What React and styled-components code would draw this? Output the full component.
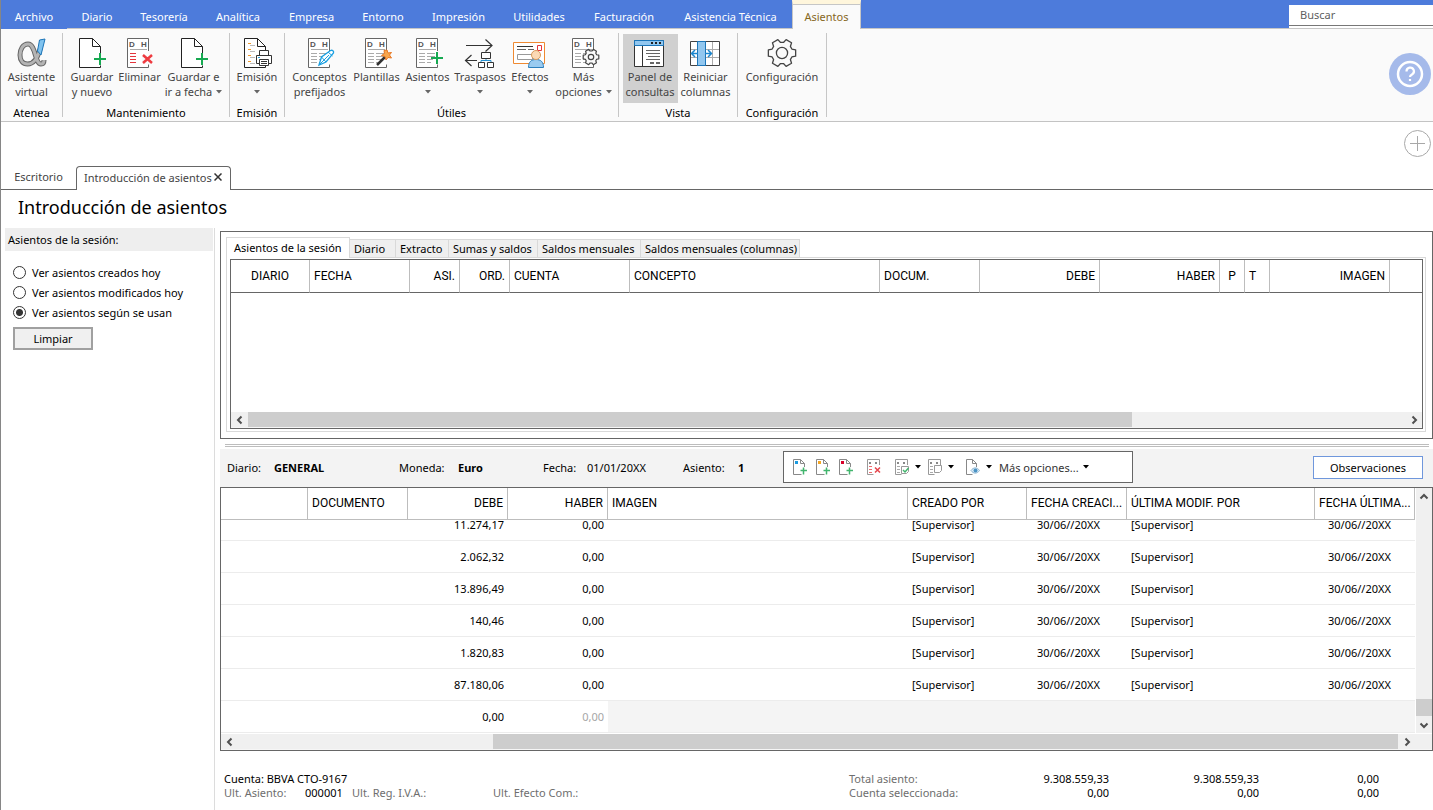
import { useLayoutEffect, useRef } from 'react';
import styled, { createGlobalStyle } from 'styled-components';

const GlobalStyle = createGlobalStyle`
  * {
    box-sizing: border-box;
  }
  html, body, #root {
    height: 100%;
  }
  body {
    margin: 0;
    background: #fff;
    color: #000;
    font-family: 'Noto Sans', 'Open Sans', sans-serif;
    font-size: 11px;
    line-height: 15px;
  }
  button, input {
    font: inherit;
    color: inherit;
    margin: 0;
  }
  button {
    padding: 0;
    border: 0;
    background: none;
    white-space: nowrap;
  }
`;

const Window = styled.div`
  display: flex;
  flex-direction: column;
  min-height: 100%;
  border-left: 1px solid #868686;
  overflow: hidden;
`;

/* ---------- menu ---------- */

const MenuBar = styled.nav`
  display: flex;
  height: 29px;
  background: #4d7bdb;
  border-bottom: 1px solid #c6c6c6;
`;

const MenuItem = styled.button`
  width: ${({ $width }) => $width}px;
  height: 28px;
  padding-top: 5px;
  color: #fff;
`;

const FileItem = styled(MenuItem)`
  height: 29px;
  padding-top: 4px;
  background: #4d7bdb;
`;

const ActiveItem = styled(MenuItem)`
  height: 29px;
  padding-top: 0;
  color: #86671c;
  background: #fafafa;
  border: 1px solid #c6c6c6;
  border-top: 4px solid #fff6dc;
  border-bottom: 0;
  box-shadow: inset 0 1px #c6c6c6;
`;

const Search = styled.div`
  width: 144px;
  height: 23px;
  margin: 5px 0 0 auto;
  background: #fff;
  input {
    display: block;
    width: 100%;
    height: 21px;
    padding: 0 11px 2px;
    border: 0;
    border-bottom: 1px solid #777;
    background: #fff;
    outline: 0;
  }
  input::placeholder {
    color: #606060;
    opacity: 1;
  }
`;

/* ---------- ribbon ---------- */

const Ribbon = styled.div`
  display: flex;
  height: 93px;
  padding: 4px 2px 4px 0;
  background: #fafafa;
  border-bottom: 1px solid #c3c3c3;
`;

const Group = styled.section`
  display: flex;
  flex-direction: column;
  align-items: center;
  flex: none;
  width: ${({ $width }) => $width}px;
  border-right: 1px solid #c6c6c6;
  h2 {
    margin: auto 0 -3px;
    font-size: 11px;
    font-weight: 400;
    line-height: 15px;
  }
`;

const Buttons = styled.div`
  display: flex;
  padding-top: 1px;
`;

const RibbonButton = styled.button`
  display: flex;
  flex-direction: column;
  align-items: center;
  width: ${({ $width }) => $width}px;
  height: 69px;
  padding-top: 4px;
  color: #444;
  background: ${({ $active }) => ($active ? '#d0d0d0' : 'none')};
  svg {
    display: block;
    flex: none;
  }
  span {
    display: flex;
    align-items: center;
    justify-content: center;
    gap: 4px;
    height: 15px;
  }
`;

const HelpButton = styled.button`
  flex: none;
  width: 42px;
  height: 42px;
  margin: 20px 0 0 auto;
  svg {
    display: block;
  }
`;

/* ---------- documents ---------- */

const DocumentBar = styled.div`
  display: flex;
  align-items: flex-end;
  height: 68px;
  border-bottom: 1px solid #666;
`;

const DocumentTab = styled.button`
  width: 75px;
  height: 24px;
  padding-bottom: 2px;
  color: #444;
`;

const CurrentTab = styled.div`
  display: flex;
  align-items: center;
  justify-content: space-between;
  width: 155px;
  height: 24px;
  margin-bottom: -1px;
  padding: 0 8px 3px 7px;
  border: 1px solid #666;
  border-bottom: 0;
  border-radius: 4px 4px 0 0;
  background: #fff;
  color: #444;
  svg {
    display: block;
  }
`;

const AddButton = styled.button`
  align-self: flex-start;
  margin: 8px 2px 0 auto;
  svg {
    display: block;
  }
`;

const Title = styled.h1`
  height: 38px;
  margin: 0;
  padding: 5px 17px;
  font-size: 18px;
  font-weight: 400;
  line-height: 25px;
`;

const Content = styled.div`
  display: flex;
  flex: 1;
`;

const Sidebar = styled.aside`
  flex: none;
  width: 214px;
  padding: 0 1px 0 4px;
  border-right: 1px solid #dcdcdc;
  h3 {
    margin: 0 0 11px;
    padding: 4px 3px;
    background: #eee;
    font-size: 11px;
    font-weight: 400;
  }
`;

const Option = styled.label`
  display: flex;
  align-items: center;
  gap: 6px;
  height: 20px;
  padding-left: 8px;
  input {
    appearance: none;
    width: 13px;
    height: 13px;
    border: 1px solid #333;
    border-radius: 50%;
    background: #fff;
  }
  input:checked {
    border-color: #333;
    background: radial-gradient(circle, #333 3px, #fff 4px);
  }
`;

const ClearButton = styled.button`
  width: 80px;
  height: 23px;
  margin: 5px 8px;
  border: 2px solid #a0a0a0;
  background: #f0f0f0;
`;

const Main = styled.main`
  flex: 1;
  min-width: 0;
  padding: 3px 0 0 5px;
`;

/* ---------- query panel ---------- */

const Panel = styled.section`
  padding: 5px 6px 6px 5px;
  border: 1px solid #666;
`;

const Tabs = styled.div`
  display: flex;
  align-items: flex-end;
  height: 20px;
`;

const Tab = styled.button`
  width: ${({ $width }) => $width}px;
  height: 18px;
  padding: 0 0 0 4px;
  border: 1px solid #d9d9d9;
  border-left: 0;
  border-bottom: 0;
  background: #efefef;
  text-align: left;
`;

const SelectedTab = styled(Tab)`
  height: 21px;
  margin-bottom: -1px;
  padding: 0 0 1px 7px;
  border-left: 1px solid #d9d9d9;
  background: #fff;
`;

const TabBody = styled.div`
  padding: 1px 2px 2px 3px;
  border: 1px solid #d9d9d9;
`;

const Frame = styled.div`
  border: 1px solid #666;
`;

const QueryArea = styled.div`
  height: 152px;
`;

const Grid = styled.table`
  width: 100%;
  table-layout: fixed;
  border-collapse: separate;
  border-spacing: 0;
  th, td {
    height: 32px;
    padding: 0 4px;
    overflow: hidden;
    white-space: nowrap;
    text-align: left;
  }
  th {
    border-right: 1px solid #bdbdbd;
    background: #fff;
    font-family: Roboto, 'Noto Sans', sans-serif;
    font-size: 12px;
    font-weight: 400;
  }
  .end {
    text-align: right;
  }
  .center {
    text-align: center;
  }
`;

const QueryGrid = styled(Grid)`
  th {
    height: 33px;
    border-bottom: 1px solid #666;
  }
  th:last-child {
    border-right: 0;
  }
`;

const EntryGrid = styled(Grid)`
  th {
    position: sticky;
    top: 0;
    border-bottom: 1px solid #bdbdbd;
  }
  td {
    border-bottom: 1px solid #ececec;
  }
  td.date {
    padding-left: 10px;
  }
  td.modified {
    padding-left: 13px;
  }
  td.disabled {
    background: #f4f4f4;
  }
  td.muted {
    color: #a6a6a6;
  }
`;

const HScroll = styled.div`
  display: flex;
  height: 16px;
  padding-right: ${({ $corner }) => ($corner ? 17 : 0)}px;
  background: #f0f0f0;
  border-bottom: 1px solid #f6f6f6;
`;

const VScroll = styled.div`
  display: flex;
  flex-direction: column;
  flex: none;
  width: 17px;
  background: #f0f0f0;
  border-left: 1px solid #fff;
`;

const Arrow = styled.button`
  display: grid;
  place-items: center;
  flex: none;
  width: ${({ $vertical }) => ($vertical ? 15 : 17)}px;
  height: ${({ $vertical }) => ($vertical ? 17 : 15)}px;
`;

const Track = styled.div`
  display: flex;
  flex: 1;
  flex-direction: ${({ $vertical }) => ($vertical ? 'column' : 'row')};
`;

const Thumb = styled.div`
  flex: none;
  background: #cdcdcd;
`;

/* ---------- entry ---------- */

const Splitter = styled.div`
  height: 3px;
  margin: 5px 4px 2px 5px;
  border: 1px solid #bdbdbd;
  border-width: 1px 0;
`;

const EntryBar = styled.div`
  display: flex;
  align-items: center;
  height: 38px;
  padding: 0 10px 2px 7px;
  background: #f3f3f3;
`;

const Field = styled.span`
  flex: none;
  width: ${({ $width }) => $width}px;
  white-space: nowrap;
`;

const Toolbar = styled.div`
  display: flex;
  align-items: center;
  flex: none;
  width: 350px;
  height: 32px;
  padding-left: 2px;
  border: 1px solid #666;
  background: #fff;
`;

const Tool = styled.button`
  display: flex;
  align-items: center;
  gap: 4px;
  margin-left: ${({ $far }) => ($far ? 12 : 7)}px;
  color: #333;
`;

const NotesButton = styled.button`
  width: 110px;
  height: 23px;
  margin-left: auto;
  border: 1px solid #6f97dc;
  background: #fff;
`;

const EntryBody = styled.div`
  display: flex;
  border-bottom: 1px solid #fff;
`;

const EntryScroll = styled.div`
  flex: 1;
  height: 245px;
  overflow: hidden;
`;

const Footer = styled.footer`
  display: flex;
  justify-content: space-between;
  padding: 21px 54px 0 4px;
  line-height: 14px;
  color: #6e6e6e;
  b {
    font-weight: 400;
    color: #000;
  }
`;

const Status = styled.div`
  display: flex;
`;

const Totals = styled.div`
  display: grid;
  grid-template-columns: 110px 150px 150px 120px;
  b {
    text-align: right;
  }
`;

/* ---------- icons ---------- */

const Caret = ({ color = '#666' }) => (
  <svg width='6' height='4' viewBox='0 0 6 4'>
    <path d='M0 0h6L3 3.5z' fill={color} />
  </svg>
);

const Chevron = ({ rotate = 0 }) => (
  <svg width='10' height='10' viewBox='0 0 10 10'>
    <path
      d='M6.5 1.5L3 5l3.5 3.5'
      fill='none'
      stroke='#505050'
      strokeWidth='2'
      transform={`rotate(${rotate} 5 5)`}
    />
  </svg>
);

const Icon = ({ left = 1, children }) => (
  <svg width='32' height='31' viewBox={`${left} 0 32 31`} fill='none' overflow='visible'>
    <g transform='translate(0 -1)'>{children}</g>
  </svg>
);

const Sheet = () => (
  <>
    <path d='M18 1.5H4.5v29h21V10z' fill='#fff' />
    <path d='M25.500 17v-7.500L17.500 1.500h-13v29h21v-2' stroke='#222' />
    <path d='M17.500 1.500v8h8' stroke='#222' />
  </>
);

const Plus = ({ x, y }) => (
  <path d={`M${x - 6} ${y}h12M${x} ${y - 6}v12`} stroke='#16a951' strokeWidth='2' />
);

const Letter = ({ x, children }) => (
  <text x={x} y='10' fontSize='8' fontFamily='Liberation Sans' fontWeight='700' fill='#555'>
    {children}
  </text>
);

const Ledger = ({ lines = '#aaa', full = true }) => (
  <>
    <path d='M5.5 1.5h21v29h-21z' fill='#fff' />
    <path d='M26.5 14V1.5h-21v29h21v-3' stroke='#666' />
    <Letter x='7'>D</Letter>
    <Letter x='19'>H</Letter>
    <path d='M8 12.5h17' stroke='#aaa' />
    <path d='M8 16.5h6M8 19.5h6M8 22.5h6M8 25.5h6' stroke={lines} />
    {full && <path d='M16 16.5h8M16 19.5h8M16 22.5h6M16 25.5h4' stroke='#aaa' />}
  </>
);

const Gear = ({ cx, cy, r, hole = 0.4, width = 1.3 }) => {
  const points = [];
  for (let i = 0; i < 6; i += 1) {
    [[-22, 0.76], [-13, 1], [13, 1], [22, 0.76]].forEach(([angle, k]) => {
      const a = ((i * 60 + angle) * Math.PI) / 180;
      points.push(`${cx + Math.cos(a) * r * k},${cy + Math.sin(a) * r * k}`);
    });
  }
  return (
    <>
      <polygon
        points={points.join(' ')}
        fill='#fafafa'
        stroke='#444'
        strokeWidth={width}
        strokeLinejoin='round'
      />
      <circle cx={cx} cy={cy} r={r * hole} stroke='#444' strokeWidth={width} />
    </>
  );
};

const ALPHA =
  'M24 12C21.500 22 17 27 11.500 27 7 27 4 23.500 4 18S7 7 12 7c8 0 6.500 20 13 20 2 0 3-1.500 3-4';

const AlphaIcon = () => (
  <Icon left={0}>
    <path d={ALPHA} stroke='#666' strokeWidth='5' />
    <path d={ALPHA} stroke='#b4b4b4' strokeWidth='3' />
    <path d='M23.500 3l5.500-1-4 16-3.500-4z' fill='#80c3ef' stroke='#1c75b8' />
  </Icon>
);

const SheetPlusIcon = () => (
  <Icon>
    <Sheet />
    <Plus x={25} y={22} />
  </Icon>
);

const DeleteIcon = () => (
  <Icon left={2}>
    <Ledger lines='#e5353c' full={false} />
    <path d='M20 18h11v9H20z' fill='#fafafa' />
    <path d='M21 18l9 8M30 18l-9 8' stroke='#ee3b40' strokeWidth='2.500' />
  </Icon>
);

const PrintIcon = () => (
  <Icon>
    <Sheet />
    <path d='M8 6.500h3M8 12.500h3M8 18.500h3M8 24.500h3' stroke='#f09a2c' />
    <path d='M10 8.500h5M10 14.500h5M10 20.500h5M10 26.500h5' stroke='#bbb' />
    <path d='M19.500 13.500h9v5h-9zM16.500 18.500h15v8h-15z' fill='#fff' stroke='#333' />
    <path d='M19.500 22.500h9v6h-9z' fill='#fff' stroke='#333' />
    <path d='M21 24.500h6M21 26.500h6' stroke='#333' />
    <path d='M18 20.500h2' stroke='#2aa0dc' />
  </Icon>
);

const PenIcon = () => (
  <Icon>
    <Ledger />
    <path
      d='M16 28l2.500-8 9-6.500c2-.8 3.500.7 3 2.500L23 25z'
      fill='#fff'
      stroke='#1ba0e1'
      strokeWidth='1.300'
    />
    <path d='M18.500 20l4.500 5M25 15l4.500 4M16 28l10-10' stroke='#1ba0e1' />
  </Icon>
);

const WandIcon = () => (
  <Icon>
    <Ledger />
    <path d='M17 28l8.500-8.500' stroke='#333' strokeWidth='2.500' />
    <path
      d='M27 13l1 3 3.500-.500L29.500 18l2 3-3.500-.5-2 2.500-1-3.500-3.500-1 3-2-.5-3z'
      fill='#f8a64c'
      stroke='#e87722'
    />
  </Icon>
);

const EntryIcon = () => (
  <Icon>
    <Ledger />
    <Plus x={26} y={21} />
  </Icon>
);

const TransferIcon = () => (
  <Icon>
    <path d='M3 8.500h26M22.500 2.500l6.500 6-6.500 6' stroke='#333' strokeWidth='1.200' />
    <path d='M14 23.500H2M8.500 18l-6 5.500 6 5.500' stroke='#333' strokeWidth='1.200' />
    <path
      d='M18.500 15.500h9v6h-9zM15.500 25.500h6v5h-6zM24.500 25.500h6v5h-6z'
      fill='#fff'
      stroke='#333'
    />
    <path d='M18 25v-1.500h10V25M23 22v1' stroke='#2590cf' />
  </Icon>
);

const EffectsIcon = () => (
  <Icon>
    <path d='M.5 5.500h31v21H.5z' fill='#fff' stroke='#ef8a32' />
    <path d='M4 9.500h16' stroke='#333' />
    <path d='M4 12.500h9M15 12.500h6' stroke='#666' />
    <path d='M4.500 17.500h15v5h-15z' stroke='#999' />
    <path d='M24.500 8.500h4v5h-4z' stroke='#e5353c' />
    <path d='M15.500 30.500c0-6 3-8 7.500-8s7.500 2 7.500 8z' fill='#9acbf0' stroke='#2c7fbd' />
    <circle cx='23' cy='18' r='4.500' fill='#fbd9b5' stroke='#d99a5b' />
  </Icon>
);

const OptionsIcon = () => (
  <Icon>
    <Ledger />
    <Gear cx={24} cy={20} r={8} hole={0.34} width={1.2} />
  </Icon>
);

const PanelIcon = () => (
  <Icon>
    <path d='M1.500 3.500h29v26h-29z' fill='#fff' stroke='#333' />
    <path d='M1.500 3.500h29v5h-29z' fill='#92c7ef' stroke='#1c75b8' />
    <path d='M18 6h2M22 6h2M26 6h2' stroke='#222' strokeWidth='2' />
    <path d='M9.500 9v20' stroke='#333' />
    <path d='M13 13.500h14M13 16.500h14M15 19.500h12M13 22.500h14' stroke='#666' />
    <path d='M17 26h4M23 26h4' stroke='#666' strokeWidth='2' />
  </Icon>
);

const ColumnsIcon = () => (
  <Icon>
    <path d='M1.500 4.500h29v24h-29z' fill='#fff' />
    <path d='M1.500 12.500h29M1.500 20.500h29M23.500 4.500v24' stroke='#aaa' />
    <path d='M1.500 4.500h29v24h-29z' stroke='#444' />
    <path d='M8.500 4.500h8v24h-8z' fill='#92c7ef' stroke='#1c75b8' />
    <path
      d='M9 16.500H3M6 13l-3.500 3.500L6 20M16 16.500h6M19 13l3.500 3.500L19 20'
      stroke='#1c86cd'
      strokeWidth='1.500'
    />
  </Icon>
);

const ConfigIcon = () => (
  <Icon left={0}>
    <Gear cx={16} cy={16} r={14} />
  </Icon>
);

const SmallIcon = ({ children }) => (
  <svg width='16' height='16' viewBox='0 0 16 16' fill='none'>
    {children}
  </svg>
);

const NewIcon = ({ color }) => (
  <SmallIcon>
    <path d='M11.500 8V4.500l-4-4h-7v15h8' stroke='#888' />
    <path d='M7.500 .5v4h4' stroke='#888' />
    <path d='M2 2h3v3H2z' fill={color} />
    <path d='M7.500 11.500h6.500M10.500 8.500v7' stroke='#41b56d' strokeWidth='1.500' />
  </SmallIcon>
);

const MiniLedger = ({ children, lines = '#aaa' }) => (
  <SmallIcon>
    <path d='M12.500 6V.5H.5v15h6' stroke='#999' />
    <path d='M2 4h2M8 4h2' stroke='#888' strokeWidth='2' />
    <path d='M2 7.500h3M2 10.500h3M2 13.500h3' stroke={lines} />
    {children}
  </SmallIcon>
);

/* ---------- data ---------- */

const menu = [
  ['Diario', 60],
  ['Tesorería', 74],
  ['Analítica', 74],
  ['Empresa', 73],
  ['Entorno', 70],
  ['Impresión', 81],
  ['Utilidades', 80],
  ['Facturación', 90],
  ['Asistencia Técnica', 123],
];

const groups = [
  { name: 'Atenea', width: 62, items: [{ icon: AlphaIcon, lines: ['Asistente', 'virtual'], width: 60 }] },
  {
    name: 'Mantenimiento',
    width: 167,
    items: [
      { icon: SheetPlusIcon, lines: ['Guardar', 'y nuevo'], width: 49 },
      { icon: DeleteIcon, lines: ['Eliminar'], width: 46 },
      { icon: SheetPlusIcon, lines: ['Guardar e', 'ir a fecha'], caret: true, width: 62 },
    ],
  },
  { name: 'Emisión', width: 55, items: [{ icon: PrintIcon, lines: ['Emisión', ''], caret: true, width: 54 }] },
  {
    name: 'Útiles',
    width: 334,
    items: [
      { icon: PenIcon, lines: ['Conceptos', 'prefijados'], width: 62 },
      { icon: WandIcon, lines: ['Plantillas'], width: 52 },
      { icon: EntryIcon, lines: ['Asientos', ''], caret: true, width: 50 },
      { icon: TransferIcon, lines: ['Traspasos', ''], caret: true, width: 55 },
      { icon: EffectsIcon, lines: ['Efectos', ''], caret: true, width: 45 },
      { icon: OptionsIcon, lines: ['Más', 'opciones'], caret: true, width: 62 },
    ],
  },
  {
    name: 'Vista',
    width: 119,
    items: [
      { icon: PanelIcon, lines: ['Panel de', 'consultas'], active: true, width: 55 },
      { icon: ColumnsIcon, lines: ['Reiniciar', 'columnas'], width: 56 },
    ],
  },
  { name: 'Configuración', width: 89, items: [{ icon: ConfigIcon, lines: ['Configuración'], width: 88 }] },
];

const queryTabs = [
  ['Diario', 46],
  ['Extracto', 53],
  ['Sumas y saldos', 89],
  ['Saldos mensuales', 103],
  ['Saldos mensuales (columnas)', 159],
];

const queryColumns = [
  ['DIARIO', 79, 'center'],
  ['FECHA', 100],
  ['ASI.', 50, 'end'],
  ['ORD.', 50, 'end'],
  ['CUENTA', 120],
  ['CONCEPTO', 250],
  ['DOCUM.', 100],
  ['DEBE', 120, 'end'],
  ['HABER', 120, 'end'],
  ['P', 25, 'center'],
  ['T', 25],
  ['IMAGEN', 120, 'end'],
  ['', undefined],
];

const entryColumns = [
  ['', 87],
  ['DOCUMENTO', 100],
  ['DEBE', 100, 'end'],
  ['HABER', 100, 'end'],
  ['IMAGEN', undefined],
  ['CREADO POR', 119],
  ['FECHA CREACI...', 100],
  ['ÚLTIMA MODIF. POR', 188],
  ['FECHA ÚLTIMA...', 100],
];

const debits = ['11.274,17', '2.062,32', '13.896,49', '140,46', '1.820,83', '87.180,06'];

/* ---------- parts ---------- */

const HorizontalBar = ({ start, size, corner }) => (
  <HScroll $corner={corner}>
    <Arrow aria-label='Izquierda'>
      <Chevron />
    </Arrow>
    <Track>
      <Thumb style={{ marginLeft: `${start}%`, width: `${size}%` }} />
    </Track>
    <Arrow aria-label='Derecha'>
      <Chevron rotate={180} />
    </Arrow>
  </HScroll>
);

const Head = ({ columns }) => (
  <>
    <colgroup>
      {columns.map(([name, width], i) => (
        <col key={name || i} width={width} />
      ))}
    </colgroup>
    <thead>
      <tr>
        {columns.map(([name, , align], i) => (
          <th key={name || i} className={align}>
            {name}
          </th>
        ))}
      </tr>
    </thead>
  </>
);

function RibbonGroup({ name, width, items }) {
  return (
    <Group $width={width}>
      <Buttons>
        {items.map(({ icon: Drawing, lines, caret, active, width: size }) => (
          <RibbonButton key={lines.join()} $width={size} $active={active}>
            <Drawing />
            {lines.map((line, i) => (
              <span key={i}>
                {line}
                {caret && i === 1 && <Caret />}
              </span>
            ))}
          </RibbonButton>
        ))}
      </Buttons>
      <h2>{name}</h2>
    </Group>
  );
}

function QueryPanel() {
  return (
    <Panel>
      <Tabs>
        <SelectedTab $width={124}>Asientos de la sesión</SelectedTab>
        {queryTabs.map(([name, width]) => (
          <Tab key={name} $width={width}>
            {name}
          </Tab>
        ))}
      </Tabs>
      <TabBody>
        <Frame>
          <QueryArea>
            <QueryGrid>
              <Head columns={queryColumns} />
            </QueryGrid>
          </QueryArea>
          <HorizontalBar start={0} size={76.4} />
        </Frame>
      </TabBody>
    </Panel>
  );
}

function EntryToolbar() {
  return (
    <Toolbar>
      <Tool aria-label='Nuevo apunte'>
        <NewIcon color='#1b9be0' />
      </Tool>
      <Tool aria-label='Insertar apunte'>
        <NewIcon color='#f5a623' />
      </Tool>
      <Tool aria-label='Duplicar apunte'>
        <NewIcon color='#d8002a' />
      </Tool>
      <Tool $far aria-label='Eliminar apunte'>
        <MiniLedger lines='#ee6a6e'>
          <path d='M8 8.500l5 5M13 8.500l-5 5' stroke='#e5454b' strokeWidth='1.500' />
        </MiniLedger>
      </Tool>
      <Tool $far aria-label='Comprobar'>
        <MiniLedger>
          <path d='M6.500 7.500h7v5l-2 2h-5z' fill='#fff' stroke='#999' />
          <path d='M8 11l2 2 3.500-4' stroke='#41b56d' strokeWidth='1.500' />
        </MiniLedger>
        <Caret color='#000' />
      </Tool>
      <Tool aria-label='Copiar'>
        <MiniLedger>
          <path d='M6.500 6.500h7v5l-2 2h-5z' fill='#fff' stroke='#999' />
        </MiniLedger>
        <Caret color='#000' />
      </Tool>
      <Tool $far aria-label='Ver documento'>
        <SmallIcon>
          <path d='M10.500 8V4.500l-4-4h-6v15h6M6.500 .5v4h4' stroke='#888' />
          <path
            d='M5 11.500c2.500-3.500 6-3.500 8.500 0-2.500 3.500-6 3.500-8.500 0z'
            fill='#dcecf8'
            stroke='#8ab4d2'
          />
          <circle cx='9.500' cy='11.500' r='2' fill='#4b93c4' />
        </SmallIcon>
        <Caret color='#000' />
      </Tool>
      <Tool>
        Más opciones...
        <Caret color='#000' />
      </Tool>
    </Toolbar>
  );
}

function EntryTable() {
  const scroller = useRef(null);

  useLayoutEffect(() => {
    scroller.current.scrollTop = scroller.current.scrollHeight;
  }, []);

  return (
    <Frame>
      <EntryBody>
        <EntryScroll ref={scroller}>
          <EntryGrid>
            <Head columns={entryColumns} />
            <tbody>
              {debits.map((debit) => (
                <tr key={debit}>
                  <td />
                  <td />
                  <td className='end'>{debit}</td>
                  <td className='end'>0,00</td>
                  <td />
                  <td>[Supervisor]</td>
                  <td className='date'>30/06//20XX</td>
                  <td>[Supervisor]</td>
                  <td className='modified'>30/06//20XX</td>
                </tr>
              ))}
              <tr>
                <td />
                <td />
                <td className='end'>0,00</td>
                <td className='end muted'>0,00</td>
                <td className='disabled' colSpan='5' />
              </tr>
            </tbody>
          </EntryGrid>
        </EntryScroll>
        <VScroll>
          <Arrow $vertical aria-label='Arriba'>
            <Chevron rotate={90} />
          </Arrow>
          <Track $vertical>
            <Thumb style={{ marginTop: 'auto', height: '17px' }} />
          </Track>
          <Arrow $vertical aria-label='Abajo'>
            <Chevron rotate={270} />
          </Arrow>
        </VScroll>
      </EntryBody>
      <HorizontalBar start={22} size={78} corner />
    </Frame>
  );
}

export default function App() {
  return (
    <Window>
      <GlobalStyle />
      <MenuBar>
        <FileItem $width={66}>Archivo</FileItem>
        {menu.map(([name, width]) => (
          <MenuItem key={name} $width={width}>
            {name}
          </MenuItem>
        ))}
        <ActiveItem $width={69}>Asientos</ActiveItem>
        <Search>
          <input type='search' placeholder='Buscar' aria-label='Buscar' />
        </Search>
      </MenuBar>
      <Ribbon>
        {groups.map((group) => (
          <RibbonGroup key={group.name} {...group} />
        ))}
        <HelpButton aria-label='Ayuda'>
          <svg width='42' height='42' viewBox='0 0 42 42' fill='none'>
            <circle cx='21' cy='21' r='21' fill='#a5baea' />
            <circle cx='21' cy='21' r='12' stroke='#fff' strokeWidth='2.500' />
            <path
              d='M17.500 18.500a3.700 3.700 0 1 1 5.500 3c-1.500.8-2 1.300-2 2.500M21 26v2'
              stroke='#fff'
              strokeWidth='2.200'
            />
          </svg>
        </HelpButton>
      </Ribbon>
      <DocumentBar>
        <DocumentTab>Escritorio</DocumentTab>
        <CurrentTab>
          Introducción de asientos
          <button aria-label='Cerrar'>
            <svg width='8' height='8' viewBox='0 0 8 8'>
              <path d='M.5 .5l7 7M7.500 .5l-7 7' stroke='#333' strokeWidth='1.500' />
            </svg>
          </button>
        </CurrentTab>
        <AddButton aria-label='Añadir'>
          <svg width='27' height='27' viewBox='0 0 27 27' fill='none' stroke='#a8a8a8'>
            <circle cx='13.500' cy='13.500' r='13' />
            <path d='M6 13.500h15M13.500 6v15' />
          </svg>
        </AddButton>
      </DocumentBar>
      <Title>Introducción de asientos</Title>
      <Content>
        <Sidebar>
          <h3>Asientos de la sesión:</h3>
          <Option>
            <input type='radio' name='filter' />
            Ver asientos creados hoy
          </Option>
          <Option>
            <input type='radio' name='filter' />
            Ver asientos modificados hoy
          </Option>
          <Option>
            <input type='radio' name='filter' defaultChecked />
            Ver asientos según se usan
          </Option>
          <ClearButton>Limpiar</ClearButton>
        </Sidebar>
        <Main>
          <QueryPanel />
          <Splitter />
          <EntryBar>
            <Field $width={47}>Diario:</Field>
            <Field as='strong' $width={125}>
              GENERAL
            </Field>
            <Field $width={59}>Moneda:</Field>
            <Field as='strong' $width={85}>
              Euro
            </Field>
            <Field $width={44}>Fecha:</Field>
            <Field $width={96}>01/01/20XX</Field>
            <Field $width={55}>Asiento:</Field>
            <Field as='strong' $width={45}>
              1
            </Field>
            <EntryToolbar />
            <NotesButton>Observaciones</NotesButton>
          </EntryBar>
          <EntryTable />
          <Footer>
            <div>
              <b>Cuenta: BBVA CTO-9167</b>
              <Status>
                <Field $width={81}>Ult. Asiento:</Field>
                <Field as='b' $width={47}>
                  000001
                </Field>
                <Field $width={141}>Ult. Reg. I.V.A.:</Field>
                <Field>Ult. Efecto Com.:</Field>
              </Status>
            </div>
            <Totals>
              <span>Total asiento:</span>
              <b>9.308.559,33</b>
              <b>9.308.559,33</b>
              <b>0,00</b>
              <span>Cuenta seleccionada:</span>
              <b>0,00</b>
              <b>0,00</b>
              <b>0,00</b>
            </Totals>
          </Footer>
        </Main>
      </Content>
    </Window>
  );
}
